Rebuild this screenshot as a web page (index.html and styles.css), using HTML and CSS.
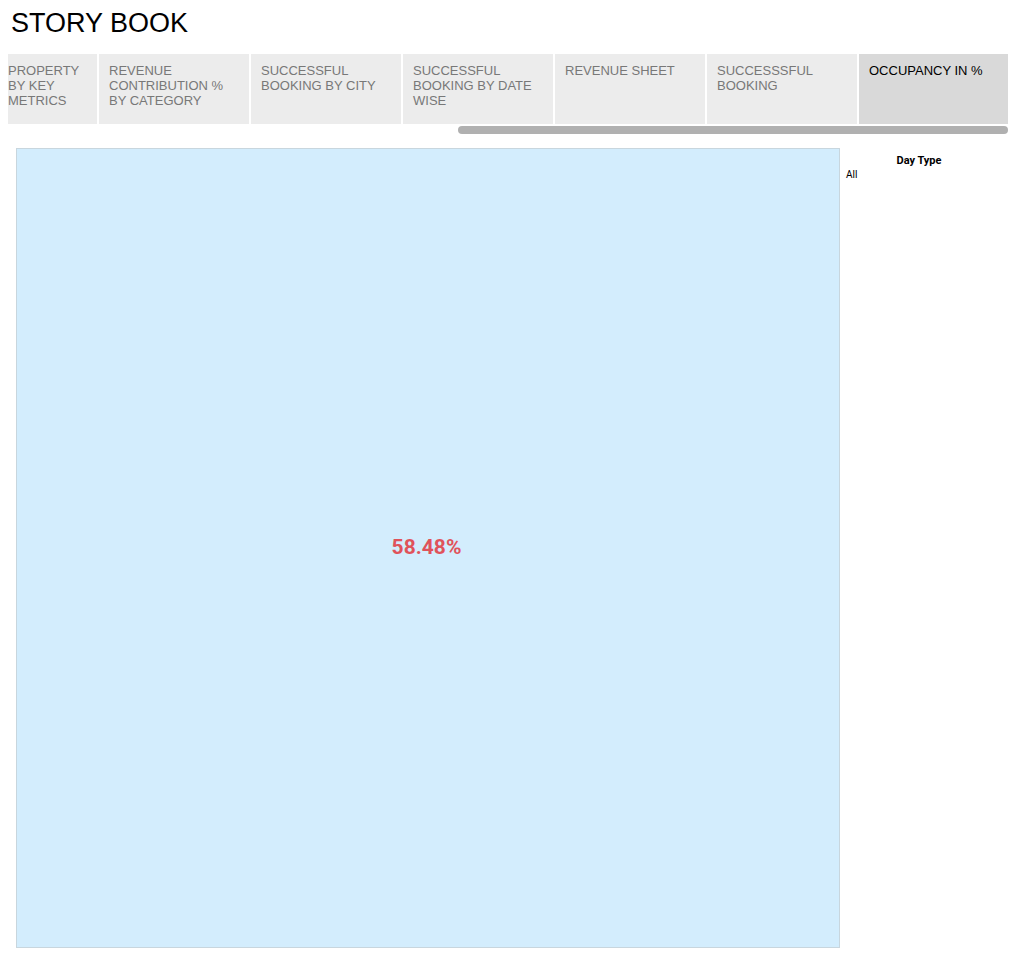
FILE: index.html
```html
<!DOCTYPE html>
<html>
<head>
<meta charset="utf-8">
<link rel="stylesheet" href="styles.css">
</head>
<body>
<h1 class="title">STORY BOOK</h1>
<div class="tabs-wrap">
  <div class="tabs">
    <div class="tab tab-first">PROPERTY BY KEY METRICS</div>
    <div class="tab">REVENUE CONTRIBUTION % BY CATEGORY</div>
    <div class="tab">SUCCESSFUL BOOKING BY CITY</div>
    <div class="tab">SUCCESSFUL BOOKING BY DATE WISE</div>
    <div class="tab">REVENUE SHEET</div>
    <div class="tab">SUCCESSSFUL BOOKING</div>
    <div class="tab tab-active">OCCUPANCY IN %</div>
  </div>
  <div class="scroll-track"><div class="scroll-thumb"></div></div>
</div>
<div class="content">
  <div class="viz">
    <div class="kpi">58.48%</div>
  </div>
  <div class="filter">
    <div class="filter-title">Day Type</div>
    <div class="filter-value">All</div>
  </div>
</div>
</body>
</html>
```
FILE: styles.css
```css
html, body {
  margin: 0;
  padding: 0;
  background: #ffffff;
}
body {
  width: 1015px;
  height: 963px;
  overflow: hidden;
  font-family: "Liberation Sans", Arial, sans-serif;
}
.title {
  margin: 0;
  padding: 7px 0 0 11px;
  height: 54px;
  box-sizing: border-box;
  font-size: 27px;
  font-weight: normal;
  line-height: 32px;
  color: #000;
}
.tabs-wrap {
  padding: 0 7px 0 8px;
}
.tabs {
  display: flex;
  gap: 2px;
  height: 70px;
}
.tab {
  width: 150px;
  flex: none;
  box-sizing: border-box;
  background: #ececec;
  padding: 9px 10px 0 10px;
  font-size: 13px;
  line-height: 15px;
  color: #787878;
}
.tab-first {
  width: 89px;
  padding-left: 0;
}
.tab-active {
  width: 149px;
  background: #d9d9d9;
  color: #000;
}
.scroll-track {
  height: 12px;
  padding-top: 2px;
  box-sizing: border-box;
  display: flex;
  justify-content: flex-end;
}
.scroll-thumb {
  width: 550px;
  height: 8px;
  border-radius: 4px;
  background: #b0b0b0;
}
.content {
  display: flex;
  padding: 12px 0 0 16px;
}
.viz {
  width: 824px;
  height: 800px;
  box-sizing: border-box;
  background: #d3edfd;
  border: 1px solid #c8d6de;
  display: flex;
  align-items: center;
  justify-content: center;
}
.kpi {
  font-family: Roboto, "Liberation Sans", sans-serif;
  font-weight: bold;
  font-size: 21px;
  color: #e0535b;
  margin: -2px 3px 0 0;
}
.filter {
  width: 146px;
  padding: 7px 0 0 6px;
  font-family: Roboto, "Liberation Sans", sans-serif;
}
.filter-title {
  font-size: 11px;
  font-weight: bold;
  line-height: 12px;
  text-align: center;
  color: #000;
}
.filter-value {
  font-size: 10px;
  line-height: 15px;
  color: #000;
}
```
